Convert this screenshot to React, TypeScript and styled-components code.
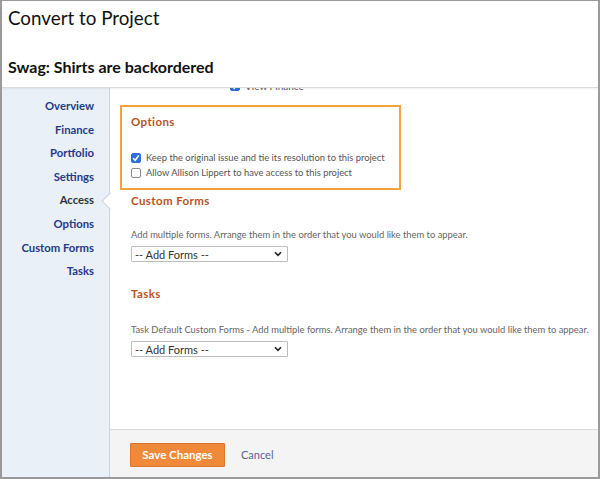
import React from "react";
import styled, { createGlobalStyle } from "styled-components";

const Global = createGlobalStyle`
  html, body { margin: 0; padding: 0; background: #fff; }
  * { box-sizing: border-box; }
  body { font-family: Lato, "Open Sans", Arial, sans-serif; }
`;

const Frame = styled.div`
  width: 600px;
  height: 479px;
  border: 2px solid #9a9a9a;
  border-top-width: 1px;
  display: flex;
  flex-direction: column;
  overflow: hidden;
  background: #fff;
`;

const Header = styled.header`
  height: 87px;
  padding: 4px 0 0 6px;
  border-bottom: 1px solid #dcdcdc;
  box-shadow: 0 1px 2px rgba(0, 0, 0, 0.06);
  position: relative;
  z-index: 2;
  background: #fff;
`;

const Title = styled.h1`
  margin: 0;
  font-size: 18.8px;
  line-height: 26px;
  font-weight: 400;
  color: #111;
`;

const Subtitle = styled.h2`
  margin: 26px 0 0;
  font-size: 16px;
  line-height: 20px;
  font-weight: 700;
  color: #111;
`;

const Body = styled.div`
  flex: 1;
  display: flex;
  min-height: 0;
`;

const Sidebar = styled.nav`
  width: 108px;
  background: #e9f0f8;
  border-right: 1px solid #c9d2dd;
  padding-top: 6px;
  display: flex;
  flex-direction: column;
  position: relative;
  z-index: 1;
`;

const NavItem = styled.div<{ $active?: boolean }>`
  position: relative;
  height: 23.6px;
  line-height: 23.6px;
  text-align: right;
  padding-right: 15px;
  font-size: 11.3px;
  font-weight: 700;
  color: ${(p) => (p.$active ? "#333" : "#263a86")};

  ${(p) =>
    p.$active &&
    `
    &::after {
      content: "";
      position: absolute;
      top: 6.3px;
      right: -7px;
      width: 11px;
      height: 11px;
      background: #fff;
      border-left: 1px solid #c9d2dd;
      border-bottom: 1px solid #c9d2dd;
      transform: rotate(45deg);
    }
  `}
`;

const Main = styled.main`
  flex: 1;
  display: flex;
  flex-direction: column;
  min-width: 0;
`;

const Content = styled.div`
  flex: 1;
  overflow: hidden;
  padding-left: 10px;
`;

const ScrolledRow = styled.div`
  margin-top: -9px;
  padding-left: 110px;
  height: 14px;
  display: flex;
  align-items: center;
  gap: 5px;
  font-size: 10px;
  color: #555;
  white-space: nowrap;
`;

const CheckBox = styled.span<{ $checked?: boolean }>`
  width: 10px;
  height: 10px;
  border-radius: 2px;
  flex: none;
  display: inline-flex;
  align-items: center;
  justify-content: center;
  background: ${(p) => (p.$checked ? "#2d6fd6" : "#fff")};
  border: 1px solid ${(p) => (p.$checked ? "#2d6fd6" : "#8a8a8a")};
`;

const OptionsBox = styled.section`
  margin-top: 12px;
  width: 281px;
  border: 2px solid #f3a23c;
  padding: 9px 9px 8px;
`;

const SectionHeading = styled.h3<{ $gap?: number }>`
  margin: ${(p) => p.$gap ?? 0}px 0 0;
  font-size: 11.5px;
  line-height: 12px;
  font-weight: 700;
  letter-spacing: 0.4px;
  color: #b9521f;
`;

const CheckRows = styled.div`
  margin-top: 22px;
  display: flex;
  flex-direction: column;
`;

const CheckRow = styled.label`
  display: flex;
  align-items: center;
  gap: 5px;
  height: 15px;
  font-size: 9.4px;
  color: #555;
  white-space: nowrap;
`;

const Section = styled.section`
  padding-left: 11px;
`;

const Description = styled.p<{ $gap: number }>`
  margin: ${(p) => p.$gap}px 0 0;
  font-size: 9.4px;
  line-height: 12px;
  color: #666;
  white-space: nowrap;
`;

const Select = styled.div`
  margin-top: 5px;
  width: 157px;
  height: 16px;
  border: 1px solid #bdbdbd;
  border-radius: 1px;
  display: flex;
  align-items: center;
  justify-content: space-between;
  padding: 0 5px 0 3px;
  font-size: 11px;
  color: #333;
  background: #fff;
`;

const Footer = styled.footer`
  height: 48px;
  border-top: 1px solid #dadada;
  background: #f4f4f4;
  display: flex;
  align-items: center;
  gap: 16px;
  padding: 0 0 0 20px;
`;

const SaveButton = styled.button`
  width: 95px;
  height: 24px;
  border: 1px solid #dd752d;
  border-radius: 1px;
  background: #f08a3a;
  color: #fff;
  font-family: inherit;
  font-size: 11.5px;
  font-weight: 700;
  padding: 0;
  margin-top: 2px;
`;

const CancelLink = styled.span`
  font-size: 11px;
  color: #5a6399;
  margin-top: 2px;
`;

const Check = () => (
  <svg width="8" height="8" viewBox="0 0 8 8">
    <path d="M1.2 4.2 L3.2 6.2 L6.8 1.6" stroke="#fff" strokeWidth="1.6" fill="none" />
  </svg>
);

const Chevron = () => (
  <svg width="8" height="6" viewBox="0 0 8 6">
    <path d="M1 1.2 L4 4.4 L7 1.2" stroke="#222" strokeWidth="1.6" fill="none" />
  </svg>
);

const navItems = ["Overview", "Finance", "Portfolio", "Settings", "Access", "Options", "Custom Forms", "Tasks"];

export default function App() {
  return (
    <>
      <Global />
      <Frame>
        <Header>
          <Title>Convert to Project</Title>
          <Subtitle>Swag: Shirts are backordered</Subtitle>
        </Header>
        <Body>
          <Sidebar>
            {navItems.map((n) => (
              <NavItem key={n} $active={n === "Access"}>
                {n}
              </NavItem>
            ))}
          </Sidebar>
          <Main>
            <Content>
              <ScrolledRow>
                <CheckBox $checked>
                  <Check />
                </CheckBox>
                View Finance
              </ScrolledRow>
              <OptionsBox>
                <SectionHeading>Options</SectionHeading>
                <CheckRows>
                  <CheckRow>
                    <CheckBox $checked>
                      <Check />
                    </CheckBox>
                    Keep the original issue and tie its resolution to this project
                  </CheckRow>
                  <CheckRow>
                    <CheckBox />
                    Allow Allison Lippert to have access to this project
                  </CheckRow>
                </CheckRows>
              </OptionsBox>
              <Section>
                <SectionHeading $gap={5}>Custom Forms</SectionHeading>
                <Description $gap={22}>
                  Add multiple forms. Arrange them in the order that you would like them to appear.
                </Description>
                <Select>
                  -- Add Forms --
                  <Chevron />
                </Select>
                <SectionHeading $gap={26}>Tasks</SectionHeading>
                <Description $gap={24}>
                  Task Default Custom Forms - Add multiple forms. Arrange them in the order that you would like them to appear.
                </Description>
                <Select>
                  -- Add Forms --
                  <Chevron />
                </Select>
              </Section>
            </Content>
            <Footer>
              <SaveButton>Save Changes</SaveButton>
              <CancelLink>Cancel</CancelLink>
            </Footer>
          </Main>
        </Body>
      </Frame>
    </>
  );
}
